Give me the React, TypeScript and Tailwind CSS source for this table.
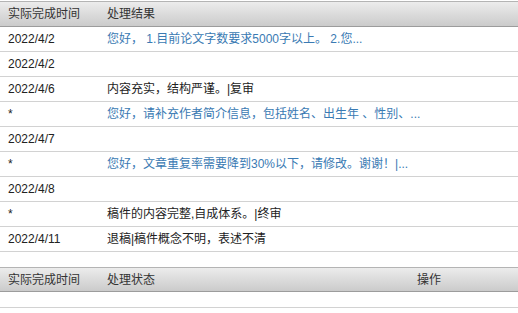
const rows: { date: string; text: string; blue?: boolean }[] = [
  { date: "2022/4/2", text: "您好， 1.目前论文字数要求5000字以上。 2.您...", blue: true },
  { date: "2022/4/2", text: "" },
  { date: "2022/4/6", text: "内容充实，结构严谨。|复审" },
  { date: "*", text: "您好，请补充作者简介信息，包括姓名、出生年 、性别、...", blue: true },
  { date: "2022/4/7", text: "" },
  { date: "*", text: "您好，文章重复率需要降到30%以下，请修改。谢谢！|...", blue: true },
  { date: "2022/4/8", text: "" },
  { date: "*", text: "稿件的内容完整,自成体系。|终审" },
  { date: "2022/4/11", text: "退稿|稿件概念不明，表述不清" },
];

const head =
  "border-t border-b border-t-[#b4b4b4] border-b-[#9c9c9c] bg-gradient-to-b from-[#ececec] to-[#cbcbcb] text-[#333]";

export default function App() {
  return (
    <div
      className="w-[518px] h-[313px] bg-white text-[12px] text-[#222] overflow-hidden"
      style={{ fontFamily: '"Liberation Sans", "Noto Sans CJK SC", sans-serif' }}
    >
      <div className="pt-px">
        <div className={`${head} grid grid-cols-[107px_1fr] h-[26px] items-center`}>
          <div className="pl-2">实际完成时间</div>
          <div>处理结果</div>
        </div>
        {rows.map((r, i) => (
          <div
            key={i}
            className="grid grid-cols-[107px_1fr] h-[25px] items-center border-b border-[#d2d2d2]"
          >
            <div className="pl-2">{r.date}</div>
            <div className={r.blue ? "text-[#3a7ab3]" : ""}>{r.text}</div>
          </div>
        ))}
      </div>
      <div className="mt-[15px]">
        <div className={`${head} grid grid-cols-[107px_310px_1fr] h-[25px] items-center`}>
          <div className="pl-2">实际完成时间</div>
          <div>处理状态</div>
          <div>操作</div>
        </div>
        <div className="h-[16px] border-b border-[#d2d2d2]" />
      </div>
    </div>
  );
}
